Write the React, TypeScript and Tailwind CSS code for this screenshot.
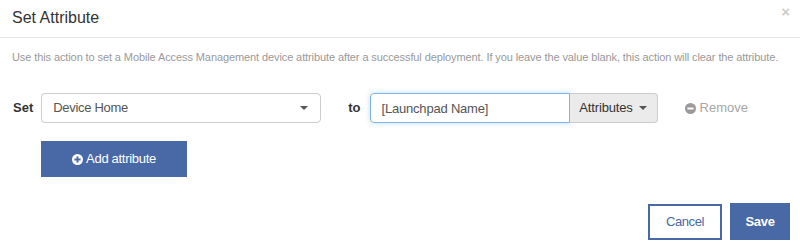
import React, { useState } from 'react';

const font = { fontFamily: '"Liberation Sans", Arial, sans-serif' };

const PlusCircle: React.FC<{ className?: string }> = ({ className }) => (
    <svg viewBox="0 0 16 16" className={className}>
        <circle cx="8" cy="8" r="8" fill="currentColor" />
        <rect x="3.5" y="6.6" width="9" height="2.8" fill="#4868a6" />
        <rect x="6.6" y="3.5" width="2.8" height="9" fill="#4868a6" />
    </svg>
);

const MinusCircle: React.FC<{ className?: string }> = ({ className }) => (
    <svg viewBox="0 0 16 16" className={className}>
        <circle cx="8" cy="8" r="8" fill="currentColor" />
        <rect x="3.5" y="6.6" width="9" height="2.8" fill="#fff" />
    </svg>
);

const Caret = () => (
    <span className="inline-block w-0 h-0 border-l-[4px] border-r-[4px] border-t-[4px] border-l-transparent border-r-transparent border-t-[#555]" />
);

const App: React.FC = () => {
    const [value, setValue] = useState('[Launchpad Name]');

    return (
        <div className="w-[800px] h-[251px] bg-white flex flex-col" style={font}>
            {/* header */}
            <div className="h-[38px] flex justify-between border-b border-[#e5e5e5] pl-3 pr-[10px]">
                <h3 className="text-[16px] leading-[36px] text-[#333]">Set Attribute</h3>
                <button className="text-[#cccccc] text-[15px] font-bold leading-none mt-[3px] h-[16px]">×</button>
            </div>

            {/* body */}
            <p className="pl-3 mt-[12px] text-[11px] leading-[14px] text-[#999] tracking-[-0.1px] whitespace-nowrap">
                Use this action to set a Mobile Access Management device attribute after a successful deployment. If you leave the value blank, this action will clear the attribute.
            </p>

            <div className="flex items-center pl-[13px] mt-[29px]">
                <span className="text-[13px] font-bold text-[#333]">Set</span>
                <div className="ml-2 w-[280px] h-[30px] border border-[#ccc] rounded-[4px] flex items-center justify-between pl-[11px] pr-[12px]">
                    <span className="text-[13px] text-[#555] tracking-[-0.3px]">Device Home</span>
                    <Caret />
                </div>
                <span className="ml-[27px] text-[13px] font-bold text-[#333]">to</span>
                <div className="ml-[9px] flex h-[30px]">
                    <input
                        value={value}
                        onChange={(e) => setValue(e.target.value)}
                        className="w-[200px] h-[30px] border border-[#7fb4e6] rounded-l-[4px] px-[11px] text-[13px] text-[#555] tracking-[-0.2px] outline-none shadow-[0_0_5px_rgba(102,175,233,0.45)]"
                        style={font}
                    />
                    <button className="w-[88px] h-[30px] bg-[#ebebeb] border border-l-0 border-[#ccc] rounded-r-[4px] flex items-center justify-center gap-[6px] text-[13px] text-[#333] tracking-[-0.15px]">
                        Attributes <Caret />
                    </button>
                </div>
                <button className="ml-[27px] flex items-center gap-[4px] text-[13px] text-[#a6a6a6]">
                    <MinusCircle className="w-[11px] h-[11px] text-[#9a9a9a]" />
                    Remove
                </button>
            </div>

            <div className="pl-[41px] mt-[18px]">
                <button className="w-[146px] h-[36px] bg-[#4868a6] text-white text-[13px] tracking-[-0.3px] flex items-center justify-center gap-[3px]">
                    <PlusCircle className="w-[11px] h-[11px] text-white" />
                    Add attribute
                </button>
            </div>

            <div className="flex justify-end items-center gap-[8px] pr-[10px] mt-[26px]">
                <button className="w-[74px] h-[36px] border-2 border-[#4868a6] text-[#4868a6] text-[13px] tracking-[-0.4px] bg-white">
                    Cancel
                </button>
                <button className="w-[60px] h-[37px] bg-[#4868a6] text-white text-[13px] font-bold tracking-[-0.3px]">
                    Save
                </button>
            </div>
        </div>
    );
};

export default App;
